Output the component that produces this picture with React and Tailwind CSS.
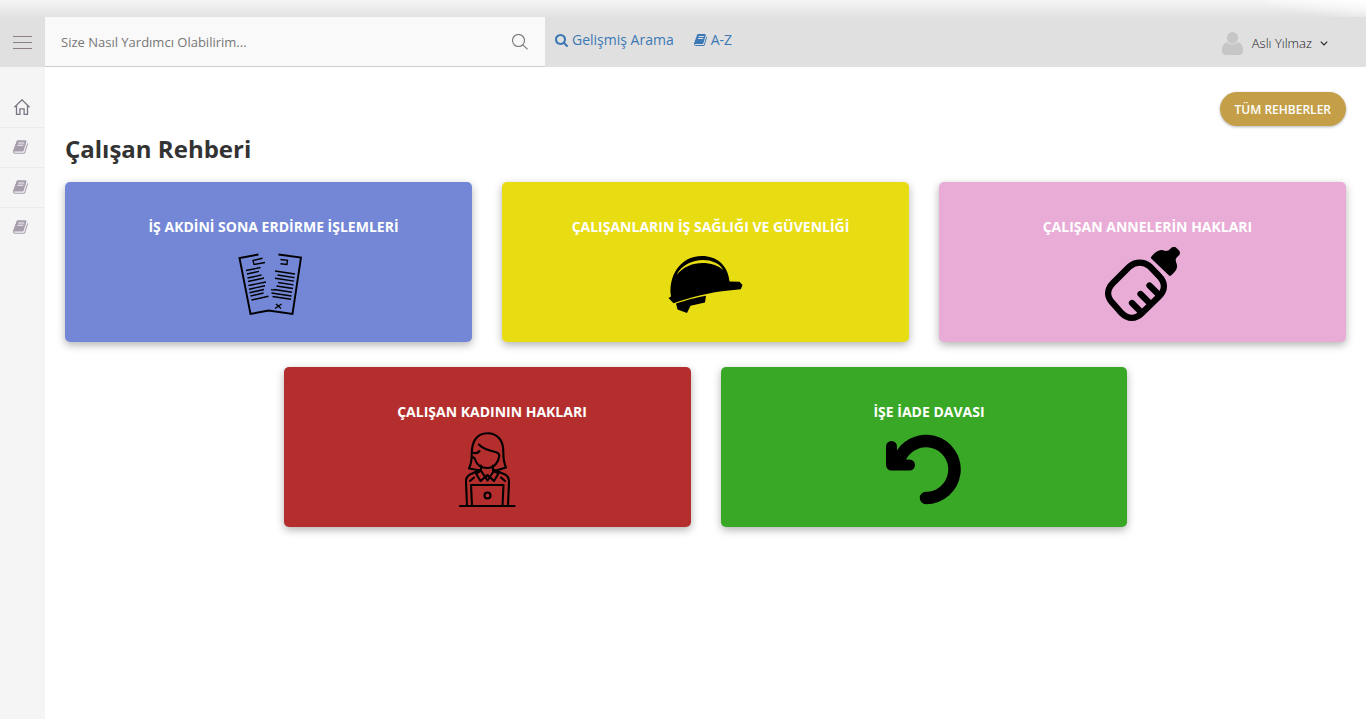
import React, { useState } from 'react';

function BookIcon({ className }) {
    return (
        <svg viewBox="0 0 1792 1792" fill="currentColor" className={className} aria-hidden="true">
            <path d="M1639 478q40 57 18 129l-275 906q-19 64-76.5 107.5t-122.5 43.5h-923q-77 0-148.5-53.5t-99.5-131.5q-24-67-2-127 0-4 3-27t4-37q1-8-3-21.5t-3-19.5q2-11 8-21t16.500-23.500 16.500-23.500q23-38 45-91.500t30-91.500q3-10 .5-30t-.5-28q3-11 17-28t17-23q21-36 42-92t25-90q1-9-2.500-32t.5-28q4-13 22-30.500t22-22.500q19-26 42.500-84.500t27.500-96.500q1-8-3-25.500t-2-26.500q2-8 9-18t18-23 17-21q8-12 16.500-30.500t15-35 16-36 19.500-32 26.500-23.500 36-11.500 47.500 5.500l-1 3q38-9 51-9h761q74 0 114 56t18 130l-274 906q-36 119-71.500 153.500t-128.500 34.500h-869q-27 0-38 15-11 16-1 43 24 70 144 70h923q29 0 56-15.500t35-41.500l300-987q7-22 5-57 38 15 59 43zm-1064 2q-4 13 2 22.500t20 9.500h608q13 0 25.500-9.500t16.500-22.500l21-64q4-13-2-22.500t-20-9.500h-608q-13 0-25.500 9.500t-16.500 22.500zm-83 256q-4 13 2 22.500t20 9.500h608q13 0 25.500-9.500t16.500-22.500l21-64q4-13-2-22.500t-20-9.500h-608q-13 0-25.500 9.500t-16.500 22.500z" />
        </svg>
    );
}

function BoldSearchIcon({ className }) {
    return (
        <svg viewBox="64 128 1664 1664" fill="currentColor" className={className} aria-hidden="true">
            <path d="M1216 832q0-185-131.5-316.500t-316.500-131.500-316.500 131.500-131.500 316.500 131.500 316.500 316.500 131.500 316.500-131.500 131.500-316.500zm512 832q0 52-38 90t-90 38q-54 0-90-38l-343-342q-179 124-399 124-143 0-273.500-55.500t-225-150-150-225-55.500-273.500 55.500-273.500 150-225 225-150 273.500-55.500 273.500 55.500 225 150 150 225 55.500 273.500q0 220-124 399l343 343q37 37 37 90z" />
        </svg>
    );
}

function ThinSearchIcon() {
    return (
        <svg viewBox="0 0 16 16" fill="none" stroke="currentColor" strokeWidth="1.1" className="size-4" aria-hidden="true">
            <circle cx="6.5" cy="6.5" r="6" />
            <path d="M10.8 10.8 15.6 15.4" />
        </svg>
    );
}

function HomeIcon() {
    return (
        <svg viewBox="0 0 16 16" fill="none" stroke="currentColor" strokeWidth="1.3" className="size-4" aria-hidden="true">
            <path d="M.4 8.300 8 .8l7.600 7.500M2.500 6.600v8.800h3.400v-5.600h4.200v5.600h3.400V6.600" />
        </svg>
    );
}

function UserIcon() {
    return (
        <svg viewBox="0 0 21 23" fill="currentColor" className="w-[21px] h-[23px]" aria-hidden="true">
            <ellipse cx="10.500" cy="5.900" rx="5.600" ry="5.900" />
            <path d="M5.300 10.200C1.500 10.700 0 14.500 0 18.500 0 21.300 1.500 23 4 23h13c2.500 0 4-1.700 4-4.500 0-4-1.500-7.800-5.300-8.300-1.300 1.400-3.100 2.200-5.200 2.200s-3.900-.8-5.200-2.200z" />
        </svg>
    );
}

// torn contract
function ContractIcon() {
    return (
        <svg viewBox="0 0 75 75" fill="none" stroke="#000" className="size-[75px]" aria-hidden="true">
            <path strokeWidth="1.900" d="M27.500 7.500 8.500 11 19.500 67 37.500 63.500 61.500 67 70 10.500 47.500 7.500" />
            <path strokeWidth="1.400" d="M31.500 11.200 22 13.500l1 4 11-2M49.500 12.500l7 .8-.6 4.200-6.400-.7M15 23.500l14.500-3M16 27l12-2.600M16.500 31l14-3M17 34.500l16-3.500M17.500 38.500l17.500-3.500M18 42.200l16-3.500M18.500 45.700l14.500-3.200M19.500 49l13-3M20.500 53l17-3.800M44 24l20 3M46.500 28l17 2.600M44 31.200l19 2.900M47 35.500l15.500 2.400M45.500 39l16.500 2.500M43 42.500l18 2.700M40 42.600l3.500.5M40.500 46l20 3M41.500 49.500l18.500 2.800" />
            <path strokeWidth="1.300" d="m45 57 5 4.500M50.500 57 44 61.500" />
        </svg>
    );
}

function HelmetIcon() {
    return (
        <svg viewBox="0 0 75 75" fill="#000" className="size-[75px]" aria-hidden="true">
            <path d="M3 49.500C0 30 11.500 9 34 9 48.500 9 60 18 61.500 34.500l10 .3 3 3.200-1.700 4.200-12 1.300C42.500 45 22.500 50.500 5.500 56.200L.5 51z" />
            <path d="M8.500 28C17 10.300 46.500 7.800 55.500 23 43.500 13 20.500 12.800 8.500 28z" fill="#e8dc13" />
            <path d="M8 56.500c11-3.500 19-5.700 30-7.800L37 55.500 22.500 58.800 19 66 9.500 62.500z" />
        </svg>
    );
}

function BottleIcon() {
    return (
        <svg viewBox="0 0 75 75" className="size-[75px]" aria-hidden="true">
            <g fill="none" stroke="#000" strokeLinecap="round" strokeWidth="6.300">
                <path d="M24.500 19.500 8 36C1.500 42.500 1.500 50 8 56.500l8.500 9.500c6.500 6.500 14 6.500 20.500 0L54 49.500c6.500-6.500 6.500-14 0-20.500l-9-9.500c-6.500-5-14-5-20.500 0z" />
                <path d="m44.500 38.500 9.500 9.500M35.500 47l10 10M27 56l9.500 9.500" />
            </g>
            <path d="M46.300 9.800C49 6.500 52 3.300 56 3c2-.2 3.500.8 5 1 1.500 0 2.500-.4 3.500-1.400L66.500.8C68-.5 70-.4 71.500 1l2.300 2.300c1.500 1.500 1.600 3.500.2 5l-2.200 2.300c-1 1-1.300 2-1 3.400.4 2 1.500 3.700 1.200 6-.4 3.500-3 5.800-6 8.500-.8.700-1.500.5-2.200-.2L46.200 11.500c-.7-.7-.5-1.100.1-1.700z" />
        </svg>
    );
}

function WomanIcon() {
    return (
        <svg viewBox="0 0 75 75" fill="none" stroke="#000" strokeWidth="2.100" strokeLinecap="round" strokeLinejoin="round" className="size-[75px]" aria-hidden="true">
            <path d="M10 74h54.500" />
            <path d="M17 74 16 50c-.2-4 1.500-6.500 5-8l10-4.500v-4M58 74 59 50c.2-4-1.500-6.500-5-8l-11-4.500v-4" />
            <path d="M22 74 21 53h32.500L52.500 74M24 45.500l-4 3.500M51 45.500l4 3.500" />
            <circle cx="37.500" cy="63.500" r="3" />
            <path d="M31 38.500 26 41.500l4.500 7.500 7-6M43 38.500l5.500 3L44 49l-6.500-6" />
            <path d="m31.500 39.500 6 9 6-9" />
            <path d="M30.500 38.500 19 36.500c2-4 2.700-7.500 2.700-13.500C21.500 9 27 1.200 37.500 1.200s16 7.800 15.800 18.800c0 6 .7 11 2.700 15.500l-10 3" />
            <path d="M22 25.500c2-.5 3 .8 3.500 3 1.500 4.500 6 7.500 12 7.500 7 0 11-6 11.800-12 .2-2-1.300-3.300-4-4-7-1.500-12-3-16.500-7.500M22.500 20.500c3 1.200 5.500.5 7-1.500" />
        </svg>
    );
}

function ReturnIcon() {
    return (
        <svg viewBox="0 0 75 75" fill="none" stroke="#000" strokeLinecap="round" strokeLinejoin="round" className="size-[75px]" aria-hidden="true">
            <path strokeWidth="12.500" d="M13.500 27A28.500 28.500 0 1 1 40 66" />
            <path strokeWidth="11" d="M5.500 14.500v18.500h18" />
            <path d="M6 33 10 18l12 14z" fill="#000" />
        </svg>
    );
}

const guides = [
    { title: 'İŞ AKDİNİ SONA ERDİRME İŞLEMLERİ', color: 'bg-[#7387d6]', Icon: ContractIcon },
    { title: 'ÇALIŞANLARIN İŞ SAĞLIĞI VE GÜVENLİĞİ', color: 'bg-[#e8dc13]', Icon: HelmetIcon },
    { title: 'ÇALIŞAN ANNELERİN HAKLARI', color: 'bg-[#e8acd6]', Icon: BottleIcon },
    { title: 'ÇALIŞAN KADININ HAKLARI', color: 'bg-[#b52e2e]', Icon: WomanIcon },
    { title: 'İŞE İADE DAVASI', color: 'bg-[#3aa827]', Icon: ReturnIcon },
];

export default function App() {
    const [query, setQuery] = useState('');

    return (
        <div className="min-h-screen flex flex-col bg-white font-['Open_Sans',sans-serif] text-sm">
            <div className="h-[17px] flex justify-end bg-linear-to-b from-[#f5f5f5] to-[#e2e2e2]">
                <div className="w-[100px] bg-linear-to-tr from-transparent from-30% to-white" />
            </div>

            <header className="h-[50px] flex bg-[#e0e0e0]">
                <button type="button" aria-label="Menü" className="w-[45px] flex flex-col items-center justify-center gap-[5px]">
                    <span className="w-[19px] h-px bg-[#8a7f85]" />
                    <span className="w-[19px] h-px bg-[#8a7f85]" />
                    <span className="w-[19px] h-px bg-[#8a7f85]" />
                </button>

                <form className="w-[500px] flex items-center bg-[#f9f9f9] border-b border-[#ccc] pl-4 pr-[17px]" onSubmit={e => e.preventDefault()}>
                    <input
                        type="text"
                        aria-label="Arama"
                        placeholder="Size Nasıl Yardımcı Olabilirim..."
                        className="flex-1 pt-0.5 text-[13px] outline-none text-[#555] placeholder:text-[#777]"
                        value={query}
                        onChange={e => setQuery(e.target.value)}
                    />
                    <button type="submit" aria-label="Ara" className="text-[#777]">
                        <ThinSearchIcon />
                    </button>
                </form>

                <nav className="flex items-center gap-5 pl-2.5 pb-1 text-[#3b78b5]">
                    <a href="#gelismis-arama" className="flex items-center gap-1">
                        <BoldSearchIcon className="size-[13px]" />
                        Gelişmiş Arama
                    </a>
                    <a href="#a-z" className="flex items-center gap-[3px]">
                        <BookIcon className="size-3.5" />
                        A-Z
                    </a>
                </nav>

                <button type="button" className="ml-auto mr-[38px] pt-0.5 flex items-center text-[13px] font-light text-[#222]">
                    <span className="text-[#c6c6c6] mr-[9px]">
                        <UserIcon />
                    </span>
                    Aslı Yılmaz
                    <svg viewBox="0 0 8 5" fill="none" stroke="currentColor" strokeWidth="1.100" className="w-2 h-[5px] ml-2" aria-hidden="true">
                        <path d="m.8.7 3.200 3.200L7.200.7" />
                    </svg>
                </button>
            </header>

            <div className="flex flex-1">
                <aside className="w-[45px] shrink-0 bg-[#f5f5f5] pt-5">
                    <ul>
                        <li className="h-10">
                            <a href="#anasayfa" aria-label="Ana Sayfa" className="h-full flex items-center pl-3.5 text-[#7c7684]">
                                <HomeIcon />
                            </a>
                        </li>
                        {[1, 2, 3].map(n => (
                            <li key={n} className="h-10 border-t border-[#ebebeb]">
                                <a href={`#rehber-${n}`} aria-label={`Rehber ${n}`} className="h-full flex items-center pl-[13px] pb-0.5 text-[#a79dab]">
                                    <BookIcon className="size-4" />
                                </a>
                            </li>
                        ))}
                    </ul>
                </aside>

                <main className="flex-1 px-5 pt-[25px] pb-8">
                    <div className="flex justify-end">
                        <a href="#tum-rehberler" className="h-[34px] flex items-center px-[15px] pt-0.5 rounded-full bg-[#c49f47] text-white text-xs font-semibold shadow-[0_1px_3px_rgba(0,0,0,0.3)]">
                            TÜM REHBERLER
                        </a>
                    </div>

                    <h1 className="mt-1.5 mb-4 text-2xl leading-[34px] font-bold text-[#333]">Çalışan Rehberi</h1>

                    <div className="flex flex-wrap justify-center gap-x-[30px] gap-y-[25px]">
                        {guides.map(({ title, color, Icon }) => (
                            <a
                                key={title}
                                href="#rehber"
                                className={`w-[calc((100%-60px)/3)] h-40 flex flex-col items-center pt-[35px] rounded-[5px] shadow-[0_3px_8px_rgba(0,0,0,0.3)] ${color}`}
                            >
                                <span className="pl-2.5 mb-2.5 text-sm leading-5 font-bold text-white">{title}</span>
                                <Icon />
                            </a>
                        ))}
                    </div>
                </main>
            </div>
        </div>
    );
}
